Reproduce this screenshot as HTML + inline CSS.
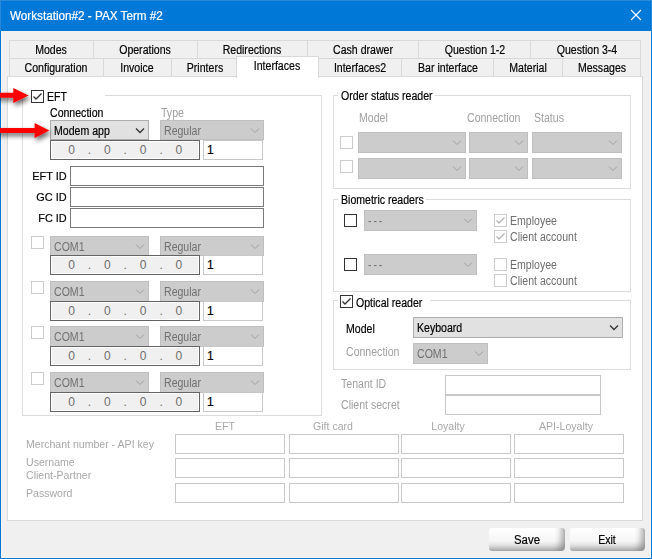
<!DOCTYPE html>
<html><head><meta charset="utf-8"><style>
html,body{margin:0;padding:0;}
body{width:652px;height:559px;position:relative;overflow:hidden;background:#f0f0f0;font-family:"Liberation Sans", sans-serif;}
.s{-webkit-text-stroke:0.2px currentColor;}
</style></head><body>
<div style="position:absolute;left:0px;top:0px;width:652px;height:31px;background:#0078d7"></div>
<div class="s" style="position:absolute;top:10.04px;font-size:12px;line-height:12px;color:#fff;white-space:nowrap;;transform:scaleX(0.975);left:10px;transform-origin:0 0;">Workstation#2 - PAX Term #2</div>
<svg style="position:absolute;left:630px;top:9px" width="12" height="12" viewBox="0 0 12 12"><path d="M1 1L11 11M11 1L1 11" stroke="#fff" stroke-width="1.1"/></svg>
<div style="position:absolute;left:0px;top:31px;width:1px;height:528px;background:#0078d7"></div>
<div style="position:absolute;left:651px;top:31px;width:1px;height:528px;background:#0078d7"></div>
<div style="position:absolute;left:0px;top:558px;width:652px;height:1px;background:#0078d7"></div>
<div style="position:absolute;left:0px;top:0px;width:652px;height:1px;background:#2a88d8"></div>
<div style="position:absolute;left:0px;top:0px;width:1px;height:31px;background:#2a88d8"></div>
<div style="position:absolute;left:651px;top:0px;width:1px;height:31px;background:#2a88d8"></div>
<div style="position:absolute;left:1px;top:31px;width:1px;height:527px;background:#f8f5f0"></div>
<div style="position:absolute;left:650px;top:31px;width:1px;height:527px;background:#f8f5f0"></div>
<div style="position:absolute;left:1px;top:557px;width:650px;height:1px;background:#f8f5f0"></div>
<div style="position:absolute;left:9px;top:40px;width:85px;height:19px;background:#f0f0f0;box-sizing:border-box;border:1px solid #d9d9d9"></div>
<div class="s" style="position:absolute;top:44.44px;font-size:12px;line-height:12px;color:#000;white-space:nowrap;letter-spacing:0px;transform:scaleX(0.88);left:-149.0px;width:400px;text-align:center;transform-origin:50% 0;">Modes</div>
<div style="position:absolute;left:93px;top:40px;width:105px;height:19px;background:#f0f0f0;box-sizing:border-box;border:1px solid #d9d9d9"></div>
<div class="s" style="position:absolute;top:44.44px;font-size:12px;line-height:12px;color:#000;white-space:nowrap;letter-spacing:0px;transform:scaleX(0.88);left:-55.0px;width:400px;text-align:center;transform-origin:50% 0;">Operations</div>
<div style="position:absolute;left:197px;top:40px;width:111px;height:19px;background:#f0f0f0;box-sizing:border-box;border:1px solid #d9d9d9"></div>
<div class="s" style="position:absolute;top:44.44px;font-size:12px;line-height:12px;color:#000;white-space:nowrap;letter-spacing:0px;transform:scaleX(0.88);left:52.0px;width:400px;text-align:center;transform-origin:50% 0;">Redirections</div>
<div style="position:absolute;left:307px;top:40px;width:112px;height:19px;background:#f0f0f0;box-sizing:border-box;border:1px solid #d9d9d9"></div>
<div class="s" style="position:absolute;top:44.44px;font-size:12px;line-height:12px;color:#000;white-space:nowrap;letter-spacing:0px;transform:scaleX(0.88);left:162.5px;width:400px;text-align:center;transform-origin:50% 0;">Cash drawer</div>
<div style="position:absolute;left:418px;top:40px;width:113px;height:19px;background:#f0f0f0;box-sizing:border-box;border:1px solid #d9d9d9"></div>
<div class="s" style="position:absolute;top:44.44px;font-size:12px;line-height:12px;color:#000;white-space:nowrap;letter-spacing:0px;transform:scaleX(0.88);left:275.0px;width:400px;text-align:center;transform-origin:50% 0;">Question 1-2</div>
<div style="position:absolute;left:530px;top:40px;width:111px;height:19px;background:#f0f0f0;box-sizing:border-box;border:1px solid #d9d9d9"></div>
<div class="s" style="position:absolute;top:44.44px;font-size:12px;line-height:12px;color:#000;white-space:nowrap;letter-spacing:0px;transform:scaleX(0.88);left:387.0px;width:400px;text-align:center;transform-origin:50% 0;">Question 3-4</div>
<div style="position:absolute;left:9px;top:58px;width:95px;height:20px;background:#f0f0f0;box-sizing:border-box;border:1px solid #d9d9d9"></div>
<div class="s" style="position:absolute;top:62.44px;font-size:12px;line-height:12px;color:#000;white-space:nowrap;letter-spacing:0px;transform:scaleX(0.88);left:-144.0px;width:400px;text-align:center;transform-origin:50% 0;">Configuration</div>
<div style="position:absolute;left:103px;top:58px;width:69px;height:20px;background:#f0f0f0;box-sizing:border-box;border:1px solid #d9d9d9"></div>
<div class="s" style="position:absolute;top:62.44px;font-size:12px;line-height:12px;color:#000;white-space:nowrap;letter-spacing:0px;transform:scaleX(0.88);left:-63.0px;width:400px;text-align:center;transform-origin:50% 0;">Invoice</div>
<div style="position:absolute;left:171px;top:58px;width:67px;height:20px;background:#f0f0f0;box-sizing:border-box;border:1px solid #d9d9d9"></div>
<div class="s" style="position:absolute;top:62.44px;font-size:12px;line-height:12px;color:#000;white-space:nowrap;letter-spacing:0px;transform:scaleX(0.88);left:4.5px;width:400px;text-align:center;transform-origin:50% 0;">Printers</div>
<div style="position:absolute;left:318px;top:58px;width:84px;height:20px;background:#f0f0f0;box-sizing:border-box;border:1px solid #d9d9d9"></div>
<div class="s" style="position:absolute;top:62.44px;font-size:12px;line-height:12px;color:#000;white-space:nowrap;letter-spacing:0px;transform:scaleX(0.88);left:159.5px;width:400px;text-align:center;transform-origin:50% 0;">Interfaces2</div>
<div style="position:absolute;left:401px;top:58px;width:93px;height:20px;background:#f0f0f0;box-sizing:border-box;border:1px solid #d9d9d9"></div>
<div class="s" style="position:absolute;top:62.44px;font-size:12px;line-height:12px;color:#000;white-space:nowrap;letter-spacing:0px;transform:scaleX(0.88);left:248.0px;width:400px;text-align:center;transform-origin:50% 0;">Bar interface</div>
<div style="position:absolute;left:493px;top:58px;width:70px;height:20px;background:#f0f0f0;box-sizing:border-box;border:1px solid #d9d9d9"></div>
<div class="s" style="position:absolute;top:62.44px;font-size:12px;line-height:12px;color:#000;white-space:nowrap;letter-spacing:0px;transform:scaleX(0.88);left:328.0px;width:400px;text-align:center;transform-origin:50% 0;">Material</div>
<div style="position:absolute;left:562px;top:58px;width:79px;height:20px;background:#f0f0f0;box-sizing:border-box;border:1px solid #d9d9d9"></div>
<div class="s" style="position:absolute;top:62.44px;font-size:12px;line-height:12px;color:#000;white-space:nowrap;letter-spacing:0px;transform:scaleX(0.88);left:401.5px;width:400px;text-align:center;transform-origin:50% 0;">Messages</div>
<div style="position:absolute;left:7px;top:76px;width:636px;height:445px;background:#fff;box-sizing:border-box;border:1px solid #d9d9d9"></div>
<div style="position:absolute;left:236px;top:56px;width:83px;height:22px;background:#fff;box-sizing:border-box;border:1px solid #d9d9d9;border-bottom:none"></div>
<div class="s" style="position:absolute;top:60.44px;font-size:12px;line-height:12px;color:#000;white-space:nowrap;letter-spacing:0px;transform:scaleX(0.88);left:77px;width:400px;text-align:center;transform-origin:50% 0;">Interfaces</div>
<div style="position:absolute;left:22px;top:95px;width:300px;height:321px;box-sizing:border-box;border:1px solid #dcdcdc"></div>
<div style="position:absolute;left:29px;top:95px;width:76px;height:1px;background:#fff"></div>
<div style="position:absolute;left:31px;top:90px;width:13px;height:13px;box-sizing:border-box;border:1px solid #333;background:#fff"></div>
<svg style="position:absolute;left:31px;top:90px" width="13" height="13" viewBox="0 0 13 13"><path d="M2.5 6.5L5 9L10.5 3.5" fill="none" stroke="#333" stroke-width="1.35"/></svg>
<div class="s" style="position:absolute;top:91.44px;font-size:12px;line-height:12px;color:#000;white-space:nowrap;;transform:scaleX(0.88);left:46.5px;transform-origin:0 0;">EFT</div>
<div class="s" style="position:absolute;top:106.74px;font-size:12px;line-height:12px;color:#000;white-space:nowrap;;transform:scaleX(0.88);left:50px;transform-origin:0 0;">Connection</div>
<div style="position:absolute;top:107.44px;font-size:12px;line-height:12px;color:#a0a0a0;white-space:nowrap;;transform:scaleX(0.88);left:161px;transform-origin:0 0;">Type</div>
<div style="position:absolute;left:160px;top:120px;width:104px;height:20px;box-sizing:border-box;border:1px solid #bfbfbf;background:#cccccc"></div>
<svg style="position:absolute;left:249px;top:126px" width="12" height="9" viewBox="0 0 12 9"><path d="M2 2.5L6 6.5L10 2.5" fill="none" stroke="#a0a0a0" stroke-width="1.0"/></svg>
<div style="position:absolute;top:125.44px;font-size:12px;line-height:12px;color:#707070;white-space:nowrap;;transform:scaleX(0.88);left:164px;transform-origin:0 0;">Regular</div>
<div style="position:absolute;left:50px;top:120px;width:99px;height:20px;box-sizing:border-box;border:1px solid #adadad;background:#e1e1e1"></div>
<svg style="position:absolute;left:134px;top:126px" width="12" height="9" viewBox="0 0 12 9"><path d="M2 2.5L6 6.5L10 2.5" fill="none" stroke="#333" stroke-width="1.25"/></svg>
<div class="s" style="position:absolute;top:125.44px;font-size:12px;line-height:12px;color:#000;white-space:nowrap;;transform:scaleX(0.88);left:54px;transform-origin:0 0;">Modem app</div>
<div style="position:absolute;left:50px;top:140px;width:150px;height:20px;box-sizing:border-box;border:1px solid #646464;background:#f0f0f0;box-shadow:inset 0 0 0 1px #fff"></div>
<div style="position:absolute;top:143.94px;font-size:12px;line-height:12px;color:#6d6d6d;white-space:nowrap;;left:68.2px;transform-origin:0 0;">0</div>
<div style="position:absolute;top:143.94px;font-size:12px;line-height:12px;color:#6d6d6d;white-space:nowrap;;left:104.0px;transform-origin:0 0;">0</div>
<div style="position:absolute;top:143.94px;font-size:12px;line-height:12px;color:#6d6d6d;white-space:nowrap;;left:139.8px;transform-origin:0 0;">0</div>
<div style="position:absolute;top:143.94px;font-size:12px;line-height:12px;color:#6d6d6d;white-space:nowrap;;left:175.6px;transform-origin:0 0;">0</div>
<div style="position:absolute;top:143.64px;font-size:12px;line-height:12px;color:#6d6d6d;white-space:nowrap;;left:87.8px;transform-origin:0 0;">.</div>
<div style="position:absolute;top:143.64px;font-size:12px;line-height:12px;color:#6d6d6d;white-space:nowrap;;left:123.6px;transform-origin:0 0;">.</div>
<div style="position:absolute;top:143.64px;font-size:12px;line-height:12px;color:#6d6d6d;white-space:nowrap;;left:159.39999999999998px;transform-origin:0 0;">.</div>
<div style="position:absolute;left:203px;top:140px;width:60px;height:20px;box-sizing:border-box;border:1px solid #c8c8c8;background:#fff"></div>
<div class="s" style="position:absolute;top:144.44px;font-size:12px;line-height:12px;color:#000;white-space:nowrap;;left:207px;transform-origin:0 0;">1</div>
<div class="s" style="position:absolute;top:171.29px;font-size:11px;line-height:11px;color:#000;white-space:nowrap;;transform:scaleX(0.99);right:585.7px;transform-origin:100% 0;">EFT ID</div>
<div style="position:absolute;left:70px;top:166px;width:194px;height:20px;box-sizing:border-box;border:1px solid #7a7a7a;background:#fff"></div>
<div class="s" style="position:absolute;top:192.29px;font-size:11px;line-height:11px;color:#000;white-space:nowrap;;transform:scaleX(0.99);right:585.7px;transform-origin:100% 0;">GC ID</div>
<div style="position:absolute;left:70px;top:187px;width:194px;height:20px;box-sizing:border-box;border:1px solid #7a7a7a;background:#fff"></div>
<div class="s" style="position:absolute;top:213.29px;font-size:11px;line-height:11px;color:#000;white-space:nowrap;;transform:scaleX(0.99);right:585.7px;transform-origin:100% 0;">FC ID</div>
<div style="position:absolute;left:70px;top:208px;width:194px;height:20px;box-sizing:border-box;border:1px solid #7a7a7a;background:#fff"></div>
<div style="position:absolute;left:31px;top:236px;width:13px;height:13px;box-sizing:border-box;border:1px solid #cccccc;background:#fff"></div>
<div style="position:absolute;left:160px;top:236px;width:104px;height:20px;box-sizing:border-box;border:1px solid #bfbfbf;background:#cccccc"></div>
<svg style="position:absolute;left:249px;top:242px" width="12" height="9" viewBox="0 0 12 9"><path d="M2 2.5L6 6.5L10 2.5" fill="none" stroke="#a0a0a0" stroke-width="1.0"/></svg>
<div style="position:absolute;top:241.44px;font-size:12px;line-height:12px;color:#707070;white-space:nowrap;;transform:scaleX(0.88);left:164px;transform-origin:0 0;">Regular</div>
<div style="position:absolute;left:50px;top:236px;width:99px;height:20px;box-sizing:border-box;border:1px solid #bfbfbf;background:#cccccc"></div>
<svg style="position:absolute;left:134px;top:242px" width="12" height="9" viewBox="0 0 12 9"><path d="M2 2.5L6 6.5L10 2.5" fill="none" stroke="#a0a0a0" stroke-width="1.0"/></svg>
<div style="position:absolute;top:241.44px;font-size:12px;line-height:12px;color:#707070;white-space:nowrap;;transform:scaleX(0.88);left:54px;transform-origin:0 0;">COM1</div>
<div style="position:absolute;left:50px;top:255px;width:150px;height:20px;box-sizing:border-box;border:1px solid #646464;background:#f0f0f0;box-shadow:inset 0 0 0 1px #fff"></div>
<div style="position:absolute;top:258.94px;font-size:12px;line-height:12px;color:#6d6d6d;white-space:nowrap;;left:68.2px;transform-origin:0 0;">0</div>
<div style="position:absolute;top:258.94px;font-size:12px;line-height:12px;color:#6d6d6d;white-space:nowrap;;left:104.0px;transform-origin:0 0;">0</div>
<div style="position:absolute;top:258.94px;font-size:12px;line-height:12px;color:#6d6d6d;white-space:nowrap;;left:139.8px;transform-origin:0 0;">0</div>
<div style="position:absolute;top:258.94px;font-size:12px;line-height:12px;color:#6d6d6d;white-space:nowrap;;left:175.6px;transform-origin:0 0;">0</div>
<div style="position:absolute;top:258.64px;font-size:12px;line-height:12px;color:#6d6d6d;white-space:nowrap;;left:87.8px;transform-origin:0 0;">.</div>
<div style="position:absolute;top:258.64px;font-size:12px;line-height:12px;color:#6d6d6d;white-space:nowrap;;left:123.6px;transform-origin:0 0;">.</div>
<div style="position:absolute;top:258.64px;font-size:12px;line-height:12px;color:#6d6d6d;white-space:nowrap;;left:159.39999999999998px;transform-origin:0 0;">.</div>
<div style="position:absolute;left:203px;top:255px;width:60px;height:20px;box-sizing:border-box;border:1px solid #c8c8c8;background:#fff"></div>
<div class="s" style="position:absolute;top:259.44px;font-size:12px;line-height:12px;color:#000;white-space:nowrap;;left:207px;transform-origin:0 0;">1</div>
<div style="position:absolute;left:31px;top:281px;width:13px;height:13px;box-sizing:border-box;border:1px solid #cccccc;background:#fff"></div>
<div style="position:absolute;left:160px;top:281px;width:104px;height:21px;box-sizing:border-box;border:1px solid #bfbfbf;background:#cccccc"></div>
<svg style="position:absolute;left:249px;top:287px" width="12" height="9" viewBox="0 0 12 9"><path d="M2 2.5L6 6.5L10 2.5" fill="none" stroke="#a0a0a0" stroke-width="1.0"/></svg>
<div style="position:absolute;top:286.44px;font-size:12px;line-height:12px;color:#707070;white-space:nowrap;;transform:scaleX(0.88);left:164px;transform-origin:0 0;">Regular</div>
<div style="position:absolute;left:50px;top:281px;width:99px;height:21px;box-sizing:border-box;border:1px solid #bfbfbf;background:#cccccc"></div>
<svg style="position:absolute;left:134px;top:287px" width="12" height="9" viewBox="0 0 12 9"><path d="M2 2.5L6 6.5L10 2.5" fill="none" stroke="#a0a0a0" stroke-width="1.0"/></svg>
<div style="position:absolute;top:286.44px;font-size:12px;line-height:12px;color:#707070;white-space:nowrap;;transform:scaleX(0.88);left:54px;transform-origin:0 0;">COM1</div>
<div style="position:absolute;left:50px;top:301px;width:150px;height:20px;box-sizing:border-box;border:1px solid #646464;background:#f0f0f0;box-shadow:inset 0 0 0 1px #fff"></div>
<div style="position:absolute;top:304.94px;font-size:12px;line-height:12px;color:#6d6d6d;white-space:nowrap;;left:68.2px;transform-origin:0 0;">0</div>
<div style="position:absolute;top:304.94px;font-size:12px;line-height:12px;color:#6d6d6d;white-space:nowrap;;left:104.0px;transform-origin:0 0;">0</div>
<div style="position:absolute;top:304.94px;font-size:12px;line-height:12px;color:#6d6d6d;white-space:nowrap;;left:139.8px;transform-origin:0 0;">0</div>
<div style="position:absolute;top:304.94px;font-size:12px;line-height:12px;color:#6d6d6d;white-space:nowrap;;left:175.6px;transform-origin:0 0;">0</div>
<div style="position:absolute;top:304.64px;font-size:12px;line-height:12px;color:#6d6d6d;white-space:nowrap;;left:87.8px;transform-origin:0 0;">.</div>
<div style="position:absolute;top:304.64px;font-size:12px;line-height:12px;color:#6d6d6d;white-space:nowrap;;left:123.6px;transform-origin:0 0;">.</div>
<div style="position:absolute;top:304.64px;font-size:12px;line-height:12px;color:#6d6d6d;white-space:nowrap;;left:159.39999999999998px;transform-origin:0 0;">.</div>
<div style="position:absolute;left:203px;top:301px;width:60px;height:20px;box-sizing:border-box;border:1px solid #c8c8c8;background:#fff"></div>
<div class="s" style="position:absolute;top:305.44px;font-size:12px;line-height:12px;color:#000;white-space:nowrap;;left:207px;transform-origin:0 0;">1</div>
<div style="position:absolute;left:31px;top:326px;width:13px;height:13px;box-sizing:border-box;border:1px solid #cccccc;background:#fff"></div>
<div style="position:absolute;left:160px;top:326px;width:104px;height:21px;box-sizing:border-box;border:1px solid #bfbfbf;background:#cccccc"></div>
<svg style="position:absolute;left:249px;top:332px" width="12" height="9" viewBox="0 0 12 9"><path d="M2 2.5L6 6.5L10 2.5" fill="none" stroke="#a0a0a0" stroke-width="1.0"/></svg>
<div style="position:absolute;top:331.44px;font-size:12px;line-height:12px;color:#707070;white-space:nowrap;;transform:scaleX(0.88);left:164px;transform-origin:0 0;">Regular</div>
<div style="position:absolute;left:50px;top:326px;width:99px;height:21px;box-sizing:border-box;border:1px solid #bfbfbf;background:#cccccc"></div>
<svg style="position:absolute;left:134px;top:332px" width="12" height="9" viewBox="0 0 12 9"><path d="M2 2.5L6 6.5L10 2.5" fill="none" stroke="#a0a0a0" stroke-width="1.0"/></svg>
<div style="position:absolute;top:331.44px;font-size:12px;line-height:12px;color:#707070;white-space:nowrap;;transform:scaleX(0.88);left:54px;transform-origin:0 0;">COM1</div>
<div style="position:absolute;left:50px;top:346px;width:150px;height:20px;box-sizing:border-box;border:1px solid #646464;background:#f0f0f0;box-shadow:inset 0 0 0 1px #fff"></div>
<div style="position:absolute;top:349.94px;font-size:12px;line-height:12px;color:#6d6d6d;white-space:nowrap;;left:68.2px;transform-origin:0 0;">0</div>
<div style="position:absolute;top:349.94px;font-size:12px;line-height:12px;color:#6d6d6d;white-space:nowrap;;left:104.0px;transform-origin:0 0;">0</div>
<div style="position:absolute;top:349.94px;font-size:12px;line-height:12px;color:#6d6d6d;white-space:nowrap;;left:139.8px;transform-origin:0 0;">0</div>
<div style="position:absolute;top:349.94px;font-size:12px;line-height:12px;color:#6d6d6d;white-space:nowrap;;left:175.6px;transform-origin:0 0;">0</div>
<div style="position:absolute;top:349.64px;font-size:12px;line-height:12px;color:#6d6d6d;white-space:nowrap;;left:87.8px;transform-origin:0 0;">.</div>
<div style="position:absolute;top:349.64px;font-size:12px;line-height:12px;color:#6d6d6d;white-space:nowrap;;left:123.6px;transform-origin:0 0;">.</div>
<div style="position:absolute;top:349.64px;font-size:12px;line-height:12px;color:#6d6d6d;white-space:nowrap;;left:159.39999999999998px;transform-origin:0 0;">.</div>
<div style="position:absolute;left:203px;top:346px;width:60px;height:20px;box-sizing:border-box;border:1px solid #c8c8c8;background:#fff"></div>
<div class="s" style="position:absolute;top:350.44px;font-size:12px;line-height:12px;color:#000;white-space:nowrap;;left:207px;transform-origin:0 0;">1</div>
<div style="position:absolute;left:31px;top:372px;width:13px;height:13px;box-sizing:border-box;border:1px solid #cccccc;background:#fff"></div>
<div style="position:absolute;left:160px;top:372px;width:104px;height:21px;box-sizing:border-box;border:1px solid #bfbfbf;background:#cccccc"></div>
<svg style="position:absolute;left:249px;top:378px" width="12" height="9" viewBox="0 0 12 9"><path d="M2 2.5L6 6.5L10 2.5" fill="none" stroke="#a0a0a0" stroke-width="1.0"/></svg>
<div style="position:absolute;top:377.44px;font-size:12px;line-height:12px;color:#707070;white-space:nowrap;;transform:scaleX(0.88);left:164px;transform-origin:0 0;">Regular</div>
<div style="position:absolute;left:50px;top:372px;width:99px;height:21px;box-sizing:border-box;border:1px solid #bfbfbf;background:#cccccc"></div>
<svg style="position:absolute;left:134px;top:378px" width="12" height="9" viewBox="0 0 12 9"><path d="M2 2.5L6 6.5L10 2.5" fill="none" stroke="#a0a0a0" stroke-width="1.0"/></svg>
<div style="position:absolute;top:377.44px;font-size:12px;line-height:12px;color:#707070;white-space:nowrap;;transform:scaleX(0.88);left:54px;transform-origin:0 0;">COM1</div>
<div style="position:absolute;left:50px;top:392px;width:150px;height:20px;box-sizing:border-box;border:1px solid #646464;background:#f0f0f0;box-shadow:inset 0 0 0 1px #fff"></div>
<div style="position:absolute;top:395.94px;font-size:12px;line-height:12px;color:#6d6d6d;white-space:nowrap;;left:68.2px;transform-origin:0 0;">0</div>
<div style="position:absolute;top:395.94px;font-size:12px;line-height:12px;color:#6d6d6d;white-space:nowrap;;left:104.0px;transform-origin:0 0;">0</div>
<div style="position:absolute;top:395.94px;font-size:12px;line-height:12px;color:#6d6d6d;white-space:nowrap;;left:139.8px;transform-origin:0 0;">0</div>
<div style="position:absolute;top:395.94px;font-size:12px;line-height:12px;color:#6d6d6d;white-space:nowrap;;left:175.6px;transform-origin:0 0;">0</div>
<div style="position:absolute;top:395.64px;font-size:12px;line-height:12px;color:#6d6d6d;white-space:nowrap;;left:87.8px;transform-origin:0 0;">.</div>
<div style="position:absolute;top:395.64px;font-size:12px;line-height:12px;color:#6d6d6d;white-space:nowrap;;left:123.6px;transform-origin:0 0;">.</div>
<div style="position:absolute;top:395.64px;font-size:12px;line-height:12px;color:#6d6d6d;white-space:nowrap;;left:159.39999999999998px;transform-origin:0 0;">.</div>
<div style="position:absolute;left:203px;top:392px;width:60px;height:20px;box-sizing:border-box;border:1px solid #c8c8c8;background:#fff"></div>
<div class="s" style="position:absolute;top:396.44px;font-size:12px;line-height:12px;color:#000;white-space:nowrap;;left:207px;transform-origin:0 0;">1</div>
<div style="position:absolute;left:333px;top:95px;width:298px;height:94px;box-sizing:border-box;border:1px solid #dcdcdc"></div>
<div style="position:absolute;left:338px;top:95px;width:97px;height:1px;background:#fff"></div>
<div class="s" style="position:absolute;top:90.14px;font-size:12px;line-height:12px;color:#000;white-space:nowrap;;transform:scaleX(0.88);left:341px;transform-origin:0 0;">Order status reader</div>
<div style="position:absolute;top:112.24px;font-size:12px;line-height:12px;color:#a0a0a0;white-space:nowrap;;transform:scaleX(0.88);left:358.5px;transform-origin:0 0;">Model</div>
<div style="position:absolute;top:112.24px;font-size:12px;line-height:12px;color:#a0a0a0;white-space:nowrap;;transform:scaleX(0.88);left:466.5px;transform-origin:0 0;">Connection</div>
<div style="position:absolute;top:112.24px;font-size:12px;line-height:12px;color:#a0a0a0;white-space:nowrap;;transform:scaleX(0.88);left:533.5px;transform-origin:0 0;">Status</div>
<div style="position:absolute;left:340px;top:136px;width:13px;height:13px;box-sizing:border-box;border:1px solid #cccccc;background:#fff"></div>
<div style="position:absolute;left:358px;top:132px;width:108px;height:21px;box-sizing:border-box;border:1px solid #bfbfbf;background:#cccccc"></div>
<svg style="position:absolute;left:451px;top:138px" width="12" height="9" viewBox="0 0 12 9"><path d="M2 2.5L6 6.5L10 2.5" fill="none" stroke="#a0a0a0" stroke-width="1.0"/></svg>
<div style="position:absolute;left:469px;top:132px;width:59px;height:21px;box-sizing:border-box;border:1px solid #bfbfbf;background:#cccccc"></div>
<svg style="position:absolute;left:513px;top:138px" width="12" height="9" viewBox="0 0 12 9"><path d="M2 2.5L6 6.5L10 2.5" fill="none" stroke="#a0a0a0" stroke-width="1.0"/></svg>
<div style="position:absolute;left:532px;top:132px;width:90px;height:21px;box-sizing:border-box;border:1px solid #bfbfbf;background:#cccccc"></div>
<svg style="position:absolute;left:607px;top:138px" width="12" height="9" viewBox="0 0 12 9"><path d="M2 2.5L6 6.5L10 2.5" fill="none" stroke="#a0a0a0" stroke-width="1.0"/></svg>
<div style="position:absolute;left:340px;top:160px;width:13px;height:13px;box-sizing:border-box;border:1px solid #cccccc;background:#fff"></div>
<div style="position:absolute;left:358px;top:158px;width:108px;height:21px;box-sizing:border-box;border:1px solid #bfbfbf;background:#cccccc"></div>
<svg style="position:absolute;left:451px;top:164px" width="12" height="9" viewBox="0 0 12 9"><path d="M2 2.5L6 6.5L10 2.5" fill="none" stroke="#a0a0a0" stroke-width="1.0"/></svg>
<div style="position:absolute;left:469px;top:158px;width:59px;height:21px;box-sizing:border-box;border:1px solid #bfbfbf;background:#cccccc"></div>
<svg style="position:absolute;left:513px;top:164px" width="12" height="9" viewBox="0 0 12 9"><path d="M2 2.5L6 6.5L10 2.5" fill="none" stroke="#a0a0a0" stroke-width="1.0"/></svg>
<div style="position:absolute;left:532px;top:158px;width:90px;height:21px;box-sizing:border-box;border:1px solid #bfbfbf;background:#cccccc"></div>
<svg style="position:absolute;left:607px;top:164px" width="12" height="9" viewBox="0 0 12 9"><path d="M2 2.5L6 6.5L10 2.5" fill="none" stroke="#a0a0a0" stroke-width="1.0"/></svg>
<div style="position:absolute;left:333px;top:199px;width:298px;height:93px;box-sizing:border-box;border:1px solid #dcdcdc"></div>
<div style="position:absolute;left:338px;top:199px;width:88px;height:1px;background:#fff"></div>
<div class="s" style="position:absolute;top:193.84px;font-size:12px;line-height:12px;color:#000;white-space:nowrap;;transform:scaleX(0.88);left:340.5px;transform-origin:0 0;">Biometric readers</div>
<div style="position:absolute;left:344px;top:214px;width:13px;height:13px;box-sizing:border-box;border:1px solid #333;background:#fff"></div>
<div style="position:absolute;left:364px;top:210px;width:113px;height:21px;box-sizing:border-box;border:1px solid #bfbfbf;background:#cccccc"></div>
<svg style="position:absolute;left:462px;top:216px" width="12" height="9" viewBox="0 0 12 9"><path d="M2 2.5L6 6.5L10 2.5" fill="none" stroke="#a0a0a0" stroke-width="1.0"/></svg>
<div style="position:absolute;top:215.44px;font-size:12px;line-height:12px;color:#707070;white-space:nowrap;;transform:scaleX(0.88);left:368px;transform-origin:0 0;"><span style="letter-spacing:-0.6px">- - -</span></div>
<div style="position:absolute;left:494px;top:214px;width:13px;height:13px;box-sizing:border-box;border:1px solid #cccccc;background:#fff"></div>
<svg style="position:absolute;left:494px;top:214px" width="13" height="13" viewBox="0 0 13 13"><path d="M2.5 6.5L5 9L10.5 3.5" fill="none" stroke="#b4b4b4" stroke-width="1.35"/></svg>
<div style="position:absolute;left:494px;top:230px;width:13px;height:13px;box-sizing:border-box;border:1px solid #cccccc;background:#fff"></div>
<svg style="position:absolute;left:494px;top:230px" width="13" height="13" viewBox="0 0 13 13"><path d="M2.5 6.5L5 9L10.5 3.5" fill="none" stroke="#b4b4b4" stroke-width="1.35"/></svg>
<div style="position:absolute;top:215.44px;font-size:12px;line-height:12px;color:#6d6d6d;white-space:nowrap;;transform:scaleX(0.88);left:510px;transform-origin:0 0;">Employee</div>
<div style="position:absolute;top:231.44px;font-size:12px;line-height:12px;color:#6d6d6d;white-space:nowrap;;transform:scaleX(0.88);left:509.5px;transform-origin:0 0;">Client account</div>
<div style="position:absolute;left:344px;top:258px;width:13px;height:13px;box-sizing:border-box;border:1px solid #333;background:#fff"></div>
<div style="position:absolute;left:364px;top:254px;width:113px;height:21px;box-sizing:border-box;border:1px solid #bfbfbf;background:#cccccc"></div>
<svg style="position:absolute;left:462px;top:260px" width="12" height="9" viewBox="0 0 12 9"><path d="M2 2.5L6 6.5L10 2.5" fill="none" stroke="#a0a0a0" stroke-width="1.0"/></svg>
<div style="position:absolute;top:259.44px;font-size:12px;line-height:12px;color:#707070;white-space:nowrap;;transform:scaleX(0.88);left:368px;transform-origin:0 0;"><span style="letter-spacing:-0.6px">- - -</span></div>
<div style="position:absolute;left:494px;top:258px;width:13px;height:13px;box-sizing:border-box;border:1px solid #cccccc;background:#fff"></div>
<div style="position:absolute;left:494px;top:274px;width:13px;height:13px;box-sizing:border-box;border:1px solid #cccccc;background:#fff"></div>
<div style="position:absolute;top:259.44px;font-size:12px;line-height:12px;color:#6d6d6d;white-space:nowrap;;transform:scaleX(0.88);left:510px;transform-origin:0 0;">Employee</div>
<div style="position:absolute;top:275.44px;font-size:12px;line-height:12px;color:#6d6d6d;white-space:nowrap;;transform:scaleX(0.88);left:509.5px;transform-origin:0 0;">Client account</div>
<div style="position:absolute;left:333px;top:300px;width:298px;height:70px;box-sizing:border-box;border:1px solid #dcdcdc"></div>
<div style="position:absolute;left:338px;top:300px;width:92px;height:1px;background:#fff"></div>
<div style="position:absolute;left:340px;top:295px;width:13px;height:13px;box-sizing:border-box;border:1px solid #333;background:#fff"></div>
<svg style="position:absolute;left:340px;top:295px" width="13" height="13" viewBox="0 0 13 13"><path d="M2.5 6.5L5 9L10.5 3.5" fill="none" stroke="#333" stroke-width="1.35"/></svg>
<div class="s" style="position:absolute;top:296.54px;font-size:12px;line-height:12px;color:#000;white-space:nowrap;;transform:scaleX(0.88);left:356px;transform-origin:0 0;">Optical reader</div>
<div class="s" style="position:absolute;top:323.14px;font-size:12px;line-height:12px;color:#000;white-space:nowrap;;transform:scaleX(0.88);left:346px;transform-origin:0 0;">Model</div>
<div style="position:absolute;left:413px;top:317px;width:210px;height:21px;box-sizing:border-box;border:1px solid #adadad;background:#e1e1e1"></div>
<svg style="position:absolute;left:608px;top:323px" width="12" height="9" viewBox="0 0 12 9"><path d="M2 2.5L6 6.5L10 2.5" fill="none" stroke="#333" stroke-width="1.25"/></svg>
<div class="s" style="position:absolute;top:322.44px;font-size:12px;line-height:12px;color:#000;white-space:nowrap;;transform:scaleX(0.88);left:417px;transform-origin:0 0;">Keyboard</div>
<div style="position:absolute;top:346.34px;font-size:12px;line-height:12px;color:#a0a0a0;white-space:nowrap;;transform:scaleX(0.88);left:346px;transform-origin:0 0;">Connection</div>
<div style="position:absolute;left:413px;top:343px;width:75px;height:21px;box-sizing:border-box;border:1px solid #bfbfbf;background:#cccccc"></div>
<svg style="position:absolute;left:473px;top:349px" width="12" height="9" viewBox="0 0 12 9"><path d="M2 2.5L6 6.5L10 2.5" fill="none" stroke="#a0a0a0" stroke-width="1.0"/></svg>
<div style="position:absolute;top:348.44px;font-size:12px;line-height:12px;color:#707070;white-space:nowrap;;transform:scaleX(0.88);left:417px;transform-origin:0 0;">COM1</div>
<div style="position:absolute;top:378.44px;font-size:12px;line-height:12px;color:#a0a0a0;white-space:nowrap;;transform:scaleX(0.88);left:341px;transform-origin:0 0;">Tenant ID</div>
<div style="position:absolute;top:399.44px;font-size:12px;line-height:12px;color:#a0a0a0;white-space:nowrap;;transform:scaleX(0.88);left:341px;transform-origin:0 0;">Client secret</div>
<div style="position:absolute;left:445px;top:375px;width:156px;height:20px;box-sizing:border-box;border:1px solid #c8c8c8;background:#fff"></div>
<div style="position:absolute;left:445px;top:395px;width:156px;height:20px;box-sizing:border-box;border:1px solid #c8c8c8;background:#fff"></div>
<div style="position:absolute;top:421.29px;font-size:11px;line-height:11px;color:#a8a8a8;white-space:nowrap;letter-spacing:0px;transform:scaleX(0.96);left:24.900000000000006px;width:400px;text-align:center;transform-origin:50% 0;">EFT</div>
<div style="position:absolute;left:175px;top:434px;width:110px;height:20px;box-sizing:border-box;border:1px solid #c8c8c8;background:#fff"></div>
<div style="position:absolute;left:175px;top:458px;width:110px;height:20px;box-sizing:border-box;border:1px solid #c8c8c8;background:#fff"></div>
<div style="position:absolute;left:175px;top:483px;width:110px;height:20px;box-sizing:border-box;border:1px solid #c8c8c8;background:#fff"></div>
<div style="position:absolute;top:421.29px;font-size:11px;line-height:11px;color:#a8a8a8;white-space:nowrap;letter-spacing:0px;transform:scaleX(0.96);left:133.39999999999998px;width:400px;text-align:center;transform-origin:50% 0;">Gift card</div>
<div style="position:absolute;left:289px;top:434px;width:110px;height:20px;box-sizing:border-box;border:1px solid #c8c8c8;background:#fff"></div>
<div style="position:absolute;left:289px;top:458px;width:110px;height:20px;box-sizing:border-box;border:1px solid #c8c8c8;background:#fff"></div>
<div style="position:absolute;left:289px;top:483px;width:110px;height:20px;box-sizing:border-box;border:1px solid #c8c8c8;background:#fff"></div>
<div style="position:absolute;top:421.29px;font-size:11px;line-height:11px;color:#a8a8a8;white-space:nowrap;letter-spacing:0px;transform:scaleX(0.96);left:248px;width:400px;text-align:center;transform-origin:50% 0;">Loyalty</div>
<div style="position:absolute;left:401px;top:434px;width:110px;height:20px;box-sizing:border-box;border:1px solid #c8c8c8;background:#fff"></div>
<div style="position:absolute;left:401px;top:458px;width:110px;height:20px;box-sizing:border-box;border:1px solid #c8c8c8;background:#fff"></div>
<div style="position:absolute;left:401px;top:483px;width:110px;height:20px;box-sizing:border-box;border:1px solid #c8c8c8;background:#fff"></div>
<div style="position:absolute;top:421.29px;font-size:11px;line-height:11px;color:#a8a8a8;white-space:nowrap;letter-spacing:0px;transform:scaleX(0.96);left:365.5px;width:400px;text-align:center;transform-origin:50% 0;">API-Loyalty</div>
<div style="position:absolute;left:514px;top:434px;width:110px;height:20px;box-sizing:border-box;border:1px solid #c8c8c8;background:#fff"></div>
<div style="position:absolute;left:514px;top:458px;width:110px;height:20px;box-sizing:border-box;border:1px solid #c8c8c8;background:#fff"></div>
<div style="position:absolute;left:514px;top:483px;width:110px;height:20px;box-sizing:border-box;border:1px solid #c8c8c8;background:#fff"></div>
<div style="position:absolute;top:439.39px;font-size:11px;line-height:11px;color:#a8a8a8;white-space:nowrap;letter-spacing:0px;transform:scaleX(0.96);left:26px;transform-origin:0 0;">Merchant number - API key</div>
<div style="position:absolute;top:457.09px;font-size:11px;line-height:11px;color:#a8a8a8;white-space:nowrap;letter-spacing:0px;transform:scaleX(0.96);left:26px;transform-origin:0 0;">Username</div>
<div style="position:absolute;top:470.09px;font-size:11px;line-height:11px;color:#a8a8a8;white-space:nowrap;letter-spacing:0px;transform:scaleX(0.96);left:26px;transform-origin:0 0;">Client-Partner</div>
<div style="position:absolute;top:487.99px;font-size:11px;line-height:11px;color:#a8a8a8;white-space:nowrap;letter-spacing:0px;transform:scaleX(0.96);left:26px;transform-origin:0 0;">Password</div>
<svg style="position:absolute;left:-4px;top:82.1px;overflow:visible" width="42.5" height="29.0" viewBox="-4 82.1 42.5 29.0"><defs><filter id="sh28" x="-20%" y="-40%" width="160%" height="200%"><feGaussianBlur in="SourceAlpha" stdDeviation="2.6"/><feOffset dx="2" dy="3"/><feComponentTransfer><feFuncA type="linear" slope="0.6"/></feComponentTransfer><feMerge><feMergeNode/><feMergeNode in="SourceGraphic"/></feMerge></filter></defs><path d="M-4 92.8 H13.3 V88.1 L28.5 95.6 L13.3 103.1 V97.8 H-4 Z" fill="#ff0000" filter="url(#sh28)"/></svg>
<svg style="position:absolute;left:-4px;top:117px;overflow:visible" width="63.4" height="29" viewBox="-4 117 63.4 29"><defs><filter id="sh49" x="-20%" y="-40%" width="160%" height="200%"><feGaussianBlur in="SourceAlpha" stdDeviation="2.6"/><feOffset dx="2" dy="3"/><feComponentTransfer><feFuncA type="linear" slope="0.6"/></feComponentTransfer><feMerge><feMergeNode/><feMergeNode in="SourceGraphic"/></feMerge></filter></defs><path d="M-4 128.1 H34.6 V123 L49.4 130.5 L34.6 138 V133.1 H-4 Z" fill="#ff0000" filter="url(#sh49)"/></svg>
<div style="position:absolute;left:489px;top:528px;width:76px;height:23px;box-sizing:border-box;border-radius:3px 3px 4px 3px;background:linear-gradient(to bottom,#ffffff 0%,#f6f6f6 55%,#e2e2e2 100%);box-shadow:inset -7px -6px 7px -4px rgba(0,0,0,0.38)"></div>
<div class="s" style="position:absolute;top:534.44px;font-size:12px;line-height:12px;color:#000;white-space:nowrap;;transform:scaleX(0.95);left:326.5px;width:400px;text-align:center;transform-origin:50% 0;">Save</div>
<div style="position:absolute;left:570px;top:528px;width:75px;height:23px;box-sizing:border-box;border-radius:3px 3px 4px 3px;background:linear-gradient(to bottom,#ffffff 0%,#f6f6f6 55%,#e2e2e2 100%);box-shadow:inset -7px -6px 7px -4px rgba(0,0,0,0.38)"></div>
<div class="s" style="position:absolute;top:534.44px;font-size:12px;line-height:12px;color:#000;white-space:nowrap;;transform:scaleX(0.88);left:407px;width:400px;text-align:center;transform-origin:50% 0;">Exit</div>
</body></html>
